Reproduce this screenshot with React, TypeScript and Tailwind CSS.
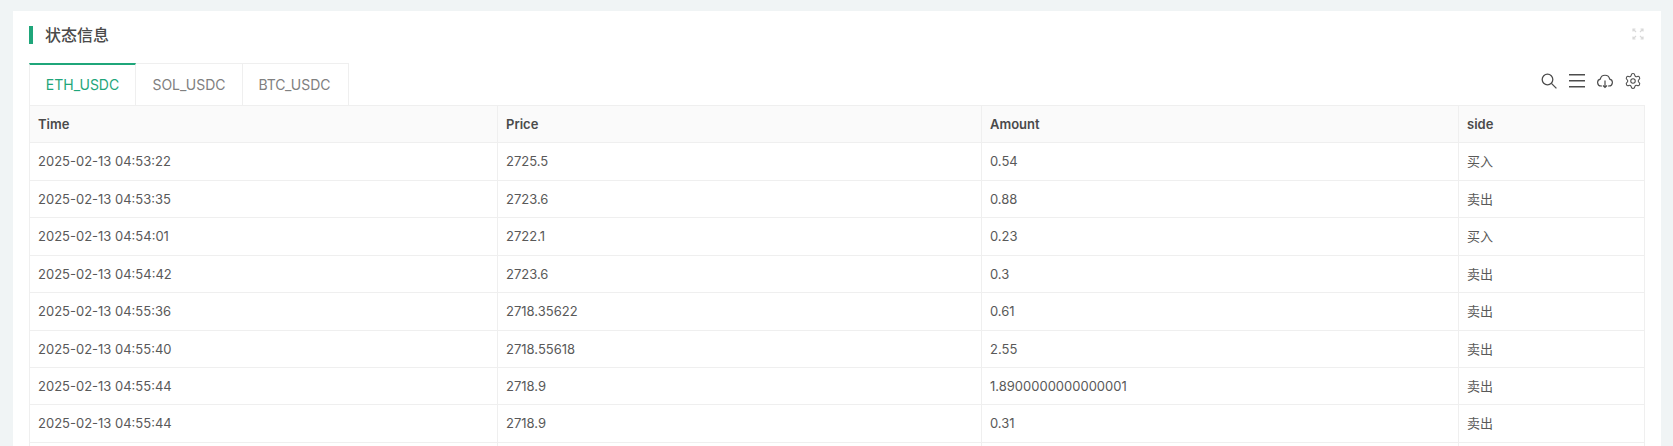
import React from 'react';
import { Settings } from 'lucide-react';

const rows = [
  { h: 'h-[38px]', cells: ['2025-02-13 04:53:22', '2725.5', '0.54', '买入'] },
  { h: 'h-[37px]', cells: ['2025-02-13 04:53:35', '2723.6', '0.88', '卖出'] },
  { h: 'h-[38px]', cells: ['2025-02-13 04:54:01', '2722.1', '0.23', '买入'] },
  { h: 'h-[37px]', cells: ['2025-02-13 04:54:42', '2723.6', '0.3', '卖出'] },
  { h: 'h-[38px]', cells: ['2025-02-13 04:55:36', '2718.35622', '0.61', '卖出'] },
  { h: 'h-[37px]', cells: ['2025-02-13 04:55:40', '2718.55618', '2.55', '卖出'] },
  { h: 'h-[37px]', cells: ['2025-02-13 04:55:44', '2718.9', '1.8900000000000001', '卖出'] },
  { h: 'h-[38px]', cells: ['2025-02-13 04:55:44', '2718.9', '0.31', '卖出'] },
  { h: 'h-[37px]', cells: ['', '', '', ''] },
];

const tabs = [
  { name: 'ETH_USDC', cls: 'w-[107px] border-t-2 border-l border-t-[#1fa67a] border-l-[#efefef] text-[#1fa67a]' },
  { name: 'SOL_USDC', cls: 'w-[107px] border-t border-t-[#efefef] text-[#808080]' },
  { name: 'BTC_USDC', cls: 'w-[106px] pr-[2px] border-t border-t-[#efefef] text-[#808080]' },
];

const App: React.FC = () => {
  return (
    <div className="h-screen overflow-hidden bg-[#f0f4f5] pl-[13px] pr-3 pt-[11px] font-['Inter','Noto_Sans_CJK_SC',sans-serif] text-[13px] text-[#595959]">
      <div className="h-[600px] bg-white px-4 pt-[15px]">
        {/* Title */}
        <div className="flex h-[18px] items-center justify-between">
          <div className="flex items-center">
            <div className="h-[18px] w-1 bg-[#1fa67a]"></div>
            <h2 className="ml-3 text-base font-medium text-[#4a4a4a]">状态信息</h2>
          </div>
          <svg className="mb-[2px] mr-px h-3 w-3 text-[#d9d9d9]" fill="none" stroke="currentColor" strokeWidth={1.2} viewBox="0 0 12 12">
            <path d="M1 1l3 3M1 3.5V1h2.5M11 1L8 4M8.5 1H11v2.5M1 11l3-3M1 8.5V11h2.5M11 11L8 8M8.5 11H11V8.5" />
          </svg>
        </div>

        {/* Tabs */}
        <div className="mt-[19px] flex h-[42px] items-stretch justify-between">
          <div className="flex">
            {tabs.map((tab) => (
              <div key={tab.name} className={`flex items-center justify-center border-r border-[#efefef] text-sm ${tab.cls}`}>
                {tab.name}
              </div>
            ))}
          </div>
          <div className="flex items-start gap-3 pt-[10px] pr-1 text-[#4d4d4d]">
            <svg className="h-4 w-4" fill="none" stroke="currentColor" strokeWidth={1.3} viewBox="0 0 16 16">
              <circle cx="6.5" cy="6.5" r="5.3" />
              <path d="M10.4 10.4l5 5" />
            </svg>
            <svg className="h-4 w-4" fill="none" stroke="currentColor" strokeWidth={1.5} viewBox="0 0 16 16">
              <path d="M0 1.75h16M0 7.75h16M0 13.75h16" />
            </svg>
            <svg className="h-4 w-4" fill="none" stroke="currentColor" strokeWidth={1.2} viewBox="0 0 16 16">
              <path d="M5 13H4a3.5 3.5 0 0 1-.7-6.9 4.8 4.8 0 0 1 9.4 0A3.5 3.5 0 0 1 12 13h-1" />
              <path d="M8 7.5v7M6 12.5l2 2 2-2" />
            </svg>
            <Settings size={18} strokeWidth={1.4} className="-m-px" />
          </div>
        </div>

        {/* Table */}
        <table className="w-[1616px] table-fixed border-collapse">
          <thead>
            <tr className="h-[37px] bg-[#fafafa] text-left">
              <th className="w-[468px] border border-[#efefef] px-2 pt-[2px] font-semibold text-[#4a4a4a]">Time</th>
              <th className="w-[484px] border border-[#efefef] px-2 pt-[2px] font-semibold text-[#4a4a4a]">Price</th>
              <th className="w-[477px] border border-[#efefef] px-2 pt-[2px] font-semibold text-[#4a4a4a]">Amount</th>
              <th className="border border-[#efefef] px-2 pt-[2px] font-semibold text-[#4a4a4a]">side</th>
            </tr>
          </thead>
          <tbody>
            {rows.map((row, i) => (
              <tr key={i} className={row.h}>
                {row.cells.map((cell, j) => (
                  <td key={j} className="border border-[#efefef] px-2 pt-px">{cell}</td>
                ))}
              </tr>
            ))}
          </tbody>
        </table>
      </div>
    </div>
  );
};

export default App;
